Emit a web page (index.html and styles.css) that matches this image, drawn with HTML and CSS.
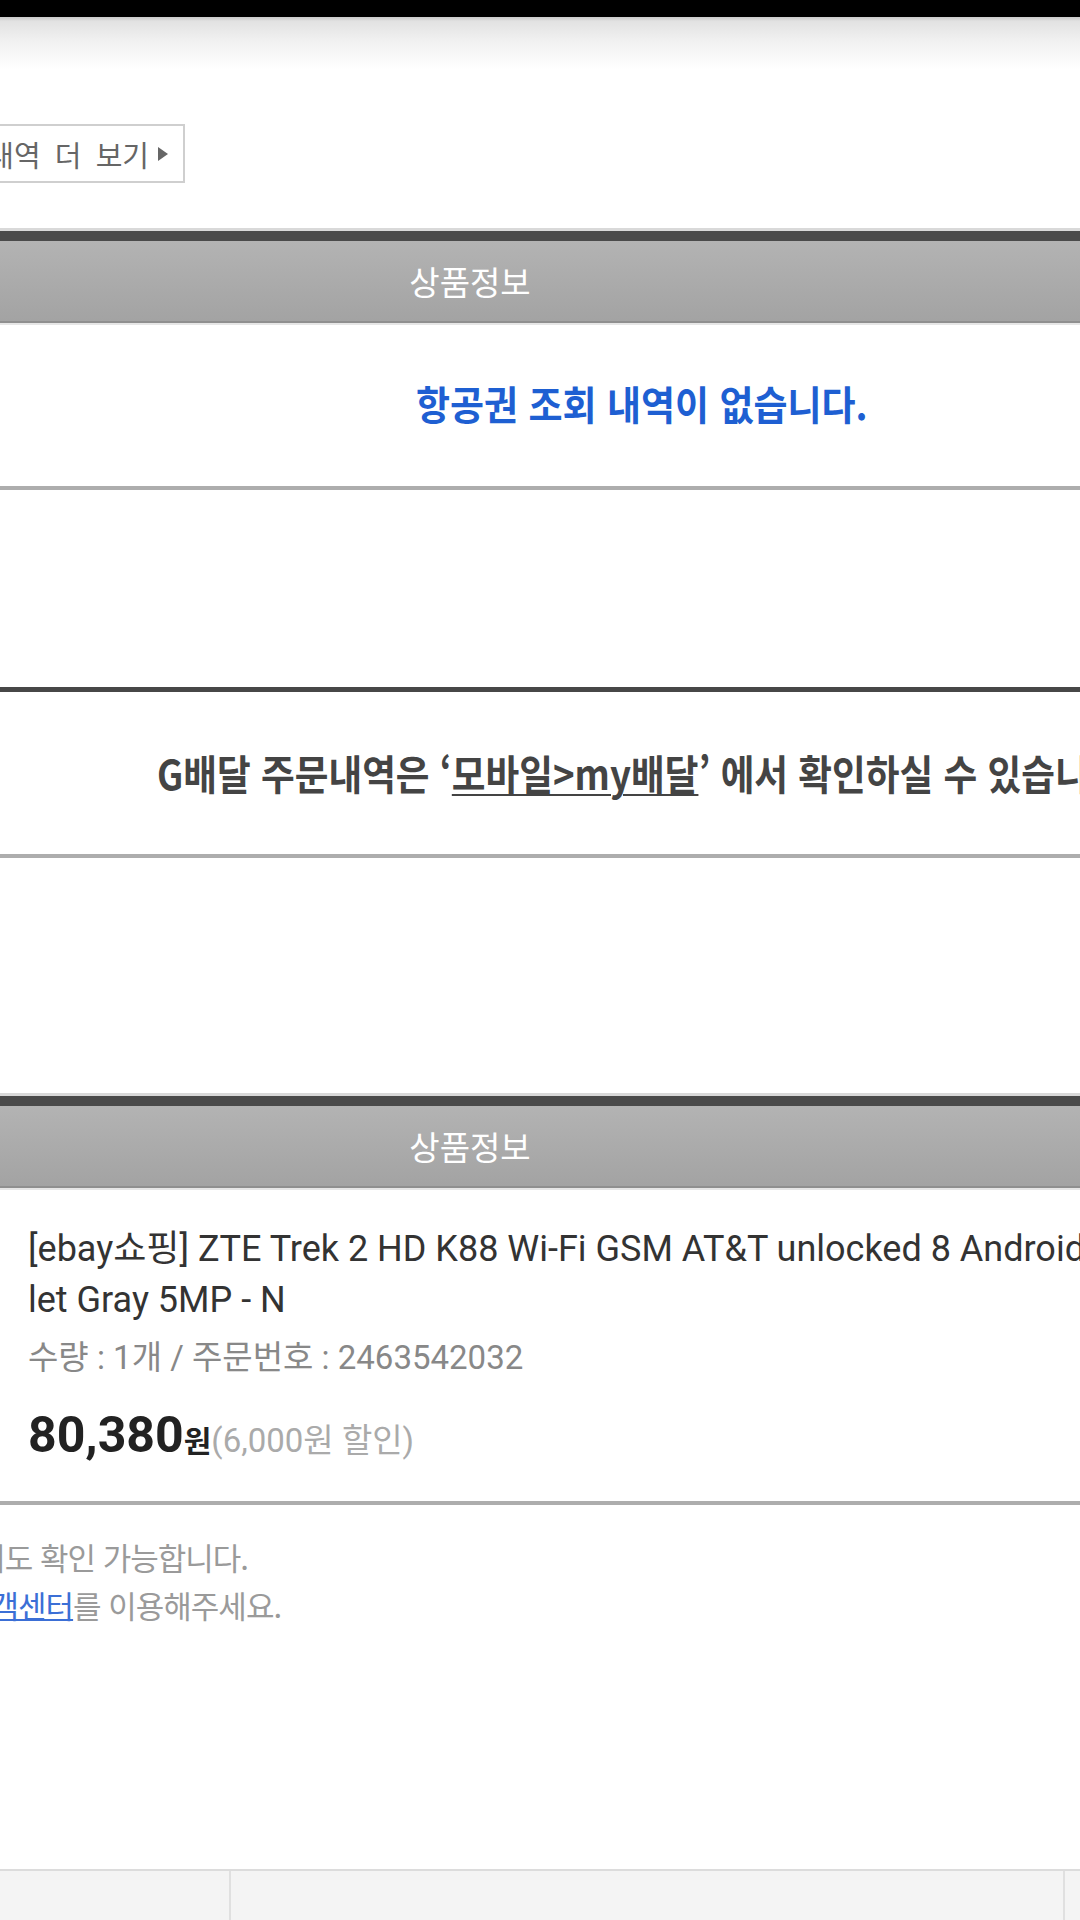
FILE: index.html
```html
<!DOCTYPE html>
<html lang="ko">
<head>
<meta charset="utf-8">
<title>주문내역</title>
<link rel="stylesheet" href="styles.css">
</head>
<body>
<div class="page">
  <div class="statusbar"></div>
  <div class="topbar"></div>

  <div class="more-row">
    <a class="more-btn" href="#"><span class="more-text">주문내역 더 보기</span><i class="tri"></i></a>
  </div>

  <section class="box box-air">
    <div class="thead"><div class="th">상품정보</div></div>
    <div class="empty-row"><span class="empty-msg">항공권 조회 내역이 없습니다.</span></div>
  </section>

  <section class="gdel">
    <p class="gdel-msg"><span class="cond">G배달 주문내역은 ‘<u>모바일&gt;my배달</u>’ 에서 확인하실 수 있습니다.</span></p>
  </section>

  <section class="box box-order">
    <div class="thead"><div class="th">상품정보</div></div>
    <div class="item">
      <p class="item-title">[ebay쇼핑] ZTE Trek 2 HD K88 Wi-Fi GSM AT&amp;T unlocked 8 Android Tab<br>let Gray 5MP - N</p>
      <p class="item-meta">수량 : 1개 / 주문번호 : 2463542032</p>
      <p class="item-price"><strong class="amount">80,380</strong><span class="won">원</span><span class="discount">(6,000원 할인)</span></p>
    </div>
  </section>

  <div class="notice">
    <p class="notice-line notice-line-pc">주문내역은 PC에서도 확인 가능합니다.</p>
    <p class="notice-line">기타 문의사항은 <a href="#" class="link">고객센터</a>를 이용해주세요.</p>
  </div>

  <footer class="footer">
    <div class="fcell fcell-1"></div>
    <div class="fcell fcell-2"></div>
    <div class="fcell fcell-3"></div>
  </footer>
</div>
</body>
</html>
```

FILE: styles.css
```css
* { box-sizing: border-box; }

html, body {
  margin: 0;
  padding: 0;
  background: #fff;
}

body {
  width: 1080px;
  height: 1920px;
  overflow: hidden;
  font-family: Roboto, "Noto Sans CJK KR", sans-serif;
  color: #333;
}

p { margin: 0; }

.page {
  display: flex;
  flex-direction: column;
  height: 1920px;
}

.statusbar {
  height: 17px;
  background: #000;
}

.topbar {
  height: 53px;
  background: linear-gradient(#c9c9c9 0, #e2e2e2 8%, #efefef 40%, #fafafa 80%, #fff 100%);
}

/* more button (left part scrolled out of view) */
.more-row {
  padding-top: 54px;
  display: flex;
}

.more-btn {
  margin-left: -80px;
  height: 59px;
  display: inline-flex;
  align-items: center;
  padding: 0 15px 0 12px;
  border: 2px solid #cfcfcf;
  text-decoration: none;
  color: #666;
  font-family: "Noto Sans CJK KR", sans-serif;
  font-size: 29px;
  word-spacing: 6px;
  white-space: nowrap;
}

.tri {
  display: inline-block;
  margin-left: 9px;
  width: 0;
  height: 0;
  border-left: 10px solid #666;
  border-top: 7px solid transparent;
  border-bottom: 7px solid transparent;
}

/* table header */
.thead {
  display: flex;
  height: 92px;
  border-top: 10px solid #4a4a4a;
  border-bottom: 2px solid #8f8f8f;
  background: linear-gradient(#b3b3b3, #a3a3a3);
  box-shadow: 0 -3px 0 #d9d9d9, 0 2px 0 #e6e6e6;
}

.th {
  width: 940px;
  text-align: center;
  line-height: 80px;
  font-family: "Noto Sans CJK KR", sans-serif;
  font-size: 33px;
  color: #fff;
}

.box-air {
  margin-top: 48px;
}

.empty-row {
  height: 167px;
  padding: 0 0 3px 416px;
  display: flex;
  align-items: center;
  border-bottom: 4px solid #adadad;
}

.empty-msg {
  display: inline-block;
  white-space: nowrap;
  transform: scaleX(0.925);
  transform-origin: left center;
  font-family: "Noto Sans CJK KR", sans-serif;
  font-size: 40px;
  font-weight: 700;
  line-height: 60px;
  color: #1e5fd2;
}

/* G배달 notice */
.gdel {
  margin-top: 197px;
  height: 171px;
  border-top: 5px solid #474747;
  border-bottom: 4px solid #adadad;
  padding: 0 0 2px 157px;
  display: flex;
  align-items: center;
}

.cond {
  display: inline-block;
  white-space: nowrap;
  transform-origin: left center;
  font-family: "Noto Sans CJK KR", sans-serif;
}

.gdel-msg .cond {
  transform: scaleX(0.894);
  font-size: 41px;
  font-weight: 700;
  line-height: 60px;
  color: #444;
}

.gdel-msg u {
  text-decoration-thickness: 2px;
  text-underline-offset: 4px;
}

/* order box */
.box-order {
  margin-top: 238px;
}

.item {
  padding: 36px 0 36px 28px;
  border-bottom: 4px solid #adadad;
}

.item-title {
  height: 102px;
  white-space: nowrap;
  font-size: 36px;
  line-height: 51px;
  color: #333;
}

.item-meta {
  height: 44px;
  margin-top: 10px;
  font-size: 33px;
  line-height: 44px;
  color: #888;
  white-space: nowrap;
}

.item-price {
  height: 60px;
  margin-top: 25px;
  line-height: 60px;
  white-space: nowrap;
}

.amount {
  font-size: 50px;
  font-weight: 700;
  color: #222;
}

.won {
  font-size: 30px;
  font-weight: 700;
  color: #222;
}

.discount {
  font-size: 33px;
  color: #aaa;
}

/* bottom notice */
.notice {
  padding-top: 28px;
  margin-left: -245px;
  font-family: "Noto Sans CJK KR", sans-serif;
  font-size: 31px;
  letter-spacing: -1px;
  color: #9a9a9a;
}

.notice-line {
  height: 48px;
  line-height: 48px;
  white-space: nowrap;
}

.notice-line-pc {
  padding-left: 12px;
}

.link {
  color: #3b6fd6;
  text-decoration: underline;
  text-decoration-thickness: 2px;
}

/* bottom bar */
.footer {
  margin-top: auto;
  height: 51px;
  display: flex;
  background: #f4f4f4;
  border-top: 2px solid #dcdcdc;
}

.fcell {
  height: 100%;
}

.fcell-1 { width: 229px; }

.fcell-2 {
  width: 834px;
  border-left: 2px solid #e0e0e0;
}

.fcell-3 {
  flex: 1;
  border-left: 2px solid #e0e0e0;
}
```
